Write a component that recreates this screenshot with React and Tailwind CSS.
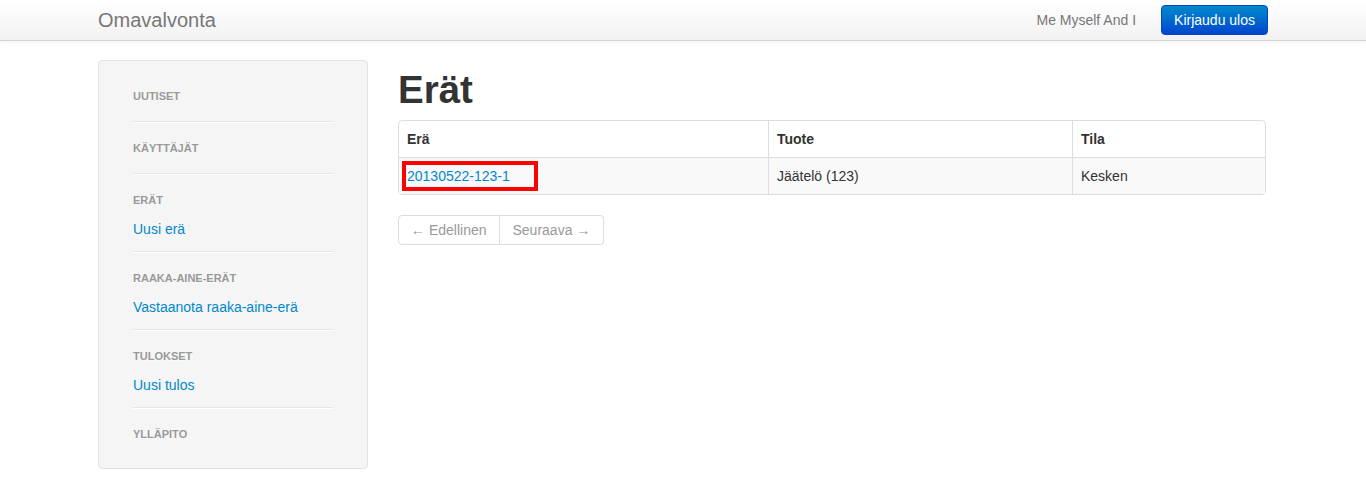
import React from 'react';

const font = { fontFamily: '"Liberation Sans", Arial, sans-serif' };

const sections = [
  { title: 'Uutiset', links: [] },
  { title: 'Käyttäjät', links: [] },
  { title: 'Erät', links: ['Uusi erä'] },
  { title: 'Raaka-aine-erät', links: ['Vastaanota raaka-aine-erä'] },
  { title: 'Tulokset', links: ['Uusi tulos'] },
  { title: 'Ylläpito', links: [] },
];

const App = () => {
  return (
    <div className="min-h-screen bg-white text-[14px] leading-5 text-[#333]" style={font}>
      {/* Navbar */}
      <div className="h-[41px] border-b border-[#d4d4d4] bg-gradient-to-b from-white to-[#f2f2f2] shadow-[0_1px_4px_rgba(0,0,0,0.065)]">
        <div className="mx-auto flex h-10 w-[1170px] items-center">
          <span className="text-[20px] leading-5 text-[#777]">Omavalvonta</span>
          <div className="ml-auto flex items-center">
            <span className="mr-[25px] text-[#777]">Me Myself And I</span>
            <button className="h-[30px] rounded border border-[#0044cc] bg-gradient-to-b from-[#0088cc] to-[#0044cc] px-3 leading-5 text-white">
              Kirjaudu ulos
            </button>
          </div>
        </div>
      </div>

      {/* Content */}
      <div className="mx-auto mt-[19px] flex w-[1170px] items-start gap-[30px]">
        {/* Sidebar */}
        <div className="w-[270px] rounded border border-[#e3e3e3] bg-[#f5f5f5] px-[34px] pt-[25px] pb-[24px]">
          {sections.map((s, i) => (
            <div key={s.title}>
              <div className="text-[11px] font-bold uppercase leading-5 text-[#999] [text-shadow:0_1px_0_rgba(255,255,255,0.5)]">
                {s.title}
              </div>
              {s.links.map((l) => (
                <a key={l} className="mt-[9px] block leading-5 text-[#0088cc]">
                  {l}
                </a>
              ))}
              {i < sections.length - 1 && (
                <div className={`${s.links.length ? 'mt-[12px]' : 'mt-[15px]'} mb-[15px] h-px border-b border-white bg-[#e5e5e5] box-content`} />
              )}
            </div>
          ))}
        </div>

        {/* Main */}
        <div className="flex-1">
          <h1 className="mt-[10px] mb-[10px] text-[38.5px] font-bold leading-10 text-[#333]">Erät</h1>

          <table className="w-[868px] border-separate border-spacing-0 rounded border border-[#ddd]">
            <thead>
              <tr>
                <th className="w-[369px] p-2 text-left font-bold">Erä</th>
                <th className="w-[304px] border-l border-[#ddd] p-2 text-left font-bold">Tuote</th>
                <th className="border-l border-[#ddd] p-2 text-left font-bold">Tila</th>
              </tr>
            </thead>
            <tbody>
              <tr className="bg-[#f9f9f9]">
                <td className="border-t border-[#ddd] p-2">
                  <span className="relative inline-block">
                    <a className="text-[#0088cc]">20130522-123-1</a>
                    <span className="absolute left-[-5px] top-[-5px] h-[30px] w-[136px] border-4 border-[#ff0000]" />
                  </span>
                </td>
                <td className="border-l border-t border-[#ddd] p-2">Jäätelö (123)</td>
                <td className="border-l border-t border-[#ddd] p-2">Kesken</td>
              </tr>
            </tbody>
          </table>

          <div className="mt-5 flex">
            <span className="rounded-l border border-[#ddd] bg-white px-[12px] py-1 text-[#999]">← Edellinen</span>
            <span className="rounded-r border border-l-0 border-[#ddd] bg-white px-[13px] py-1 text-[#999]">Seuraava →</span>
          </div>
        </div>
      </div>
    </div>
  );
};

export default App;
